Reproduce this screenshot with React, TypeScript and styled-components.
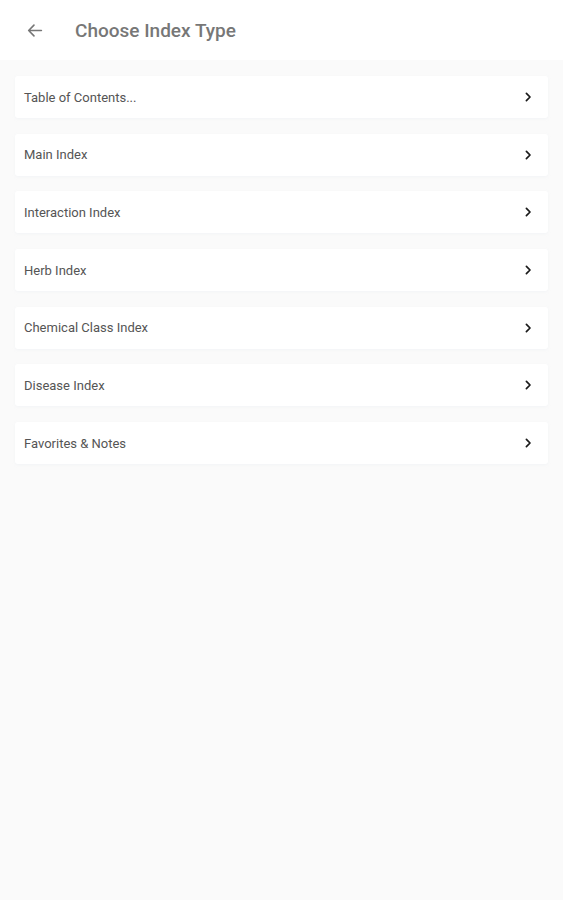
import React from "react";
import styled, { createGlobalStyle } from "styled-components";

const GlobalStyle = createGlobalStyle`
  html, body { margin: 0; padding: 0; background: #fafafa; }
  body { font-family: Roboto, "Liberation Sans", sans-serif; }
`;

const Page = styled.div`
  min-height: 900px;
  background: #fafafa;
  display: flex;
  flex-direction: column;
`;

const Header = styled.header`
  height: 60px;
  background: #ffffff;
  display: flex;
  align-items: center;
  padding-left: 26px;
  gap: 32px;
  box-sizing: border-box;
`;

const BackButton = styled.button`
  border: none;
  background: none;
  padding: 0;
  width: 17px;
  height: 17px;
  display: flex;
  align-items: center;
  justify-content: center;
  color: #767676;
  cursor: pointer;
`;

const Title = styled.h1`
  margin: 0;
  font-size: 19px;
  font-weight: 500;
  color: #777777;
  letter-spacing: 0;
`;

const List = styled.div`
  display: flex;
  flex-direction: column;
  gap: 15.7px;
  padding: 16px 15px 0 15px;
`;

const Item = styled.div`
  height: 42px;
  background: #ffffff;
  border-radius: 3px;
  box-shadow: 0 1px 3px rgba(210, 220, 235, 0.18);
  display: flex;
  align-items: center;
  justify-content: space-between;
  padding: 0 14px 0 9px;
  box-sizing: border-box;
  cursor: pointer;
`;

const Label = styled.span`
  font-size: 13px;
  font-weight: 400;
  color: #555555;
`;

const Chevron = styled.svg`
  width: 12px;
  height: 12px;
`;

const items = [
  "Table of Contents...",
  "Main Index",
  "Interaction Index",
  "Herb Index",
  "Chemical Class Index",
  "Disease Index",
  "Favorites & Notes",
];

export default function App() {
  return (
    <>
      <GlobalStyle />
      <Page>
        <Header>
          <BackButton aria-label="Back">
            <svg width="17" height="17" viewBox="0 0 16 16" fill="none">
              <path
                d="M14.5 8H2.5M7.5 3L2.5 8L7.5 13"
                stroke="currentColor"
                strokeWidth="1.5"
                strokeLinecap="round"
                strokeLinejoin="round"
              />
            </svg>
          </BackButton>
          <Title>Choose Index Type</Title>
        </Header>
        <List>
          {items.map((t) => (
            <Item key={t}>
              <Label>{t}</Label>
              <Chevron viewBox="0 0 12 12" fill="none">
                <path
                  d="M4.4 2.3L8 6L4.4 9.7"
                  stroke="#1a1a1a"
                  strokeWidth="1.7"
                  strokeLinecap="round"
                  strokeLinejoin="round"
                />
              </Chevron>
            </Item>
          ))}
        </List>
      </Page>
    </>
  );
}
